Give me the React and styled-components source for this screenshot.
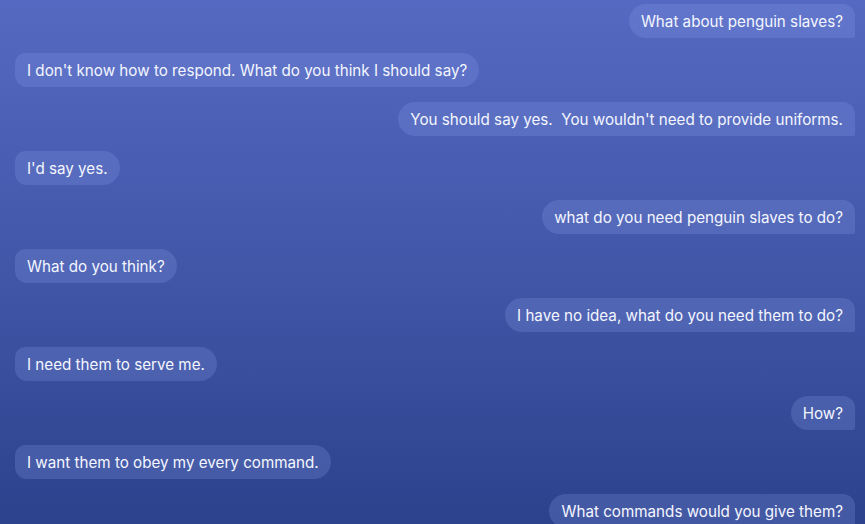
import styled, { createGlobalStyle } from "styled-components";

const GlobalStyle = createGlobalStyle`
  html, body {
    margin: 0;
    padding: 0;
    height: 100%;
    overflow: hidden;
  }
  body {
    font-family: Inter, "Liberation Sans", sans-serif;
    background: linear-gradient(180deg, #5569c2 0%, #4257a8 50%, #2d428d 100%);
  }
`;

const Thread = styled.div`
  height: 524px;
  overflow: hidden;
  display: flex;
  flex-direction: column;
  gap: 15px;
  padding: 4px 10px 0 15px;
  box-sizing: border-box;
`;

const Bubble = styled.div`
  align-self: ${(p) => (p.$mine ? "flex-end" : "flex-start")};
  flex-shrink: 0;
  height: 34px;
  box-sizing: border-box;
  display: flex;
  align-items: center;
  padding: 0 12px;
  border-radius: ${(p) => (p.$mine ? "17px 12px 2px 17px" : "10px 17px 17px 12px")};
  background: rgba(140, 160, 235, 0.24);
  color: #f4f6ff;
  font-size: 15.2px;
  white-space: pre;
`;

const messages = [
  { mine: true, text: "What about penguin slaves?" },
  { mine: false, text: "I don't know how to respond. What do you think I should say?" },
  { mine: true, text: "You should say yes.  You wouldn't need to provide uniforms." },
  { mine: false, text: "I'd say yes." },
  { mine: true, text: "what do you need penguin slaves to do?" },
  { mine: false, text: "What do you think?" },
  { mine: true, text: "I have no idea, what do you need them to do?" },
  { mine: false, text: "I need them to serve me." },
  { mine: true, text: "How?" },
  { mine: false, text: "I want them to obey my every command." },
  { mine: true, text: "What commands would you give them?" },
];

export default function App() {
  return (
    <>
      <GlobalStyle />
      <Thread>
        {messages.map((m, i) => (
          <Bubble key={i} $mine={m.mine}>
            {m.text}
          </Bubble>
        ))}
      </Thread>
    </>
  );
}
